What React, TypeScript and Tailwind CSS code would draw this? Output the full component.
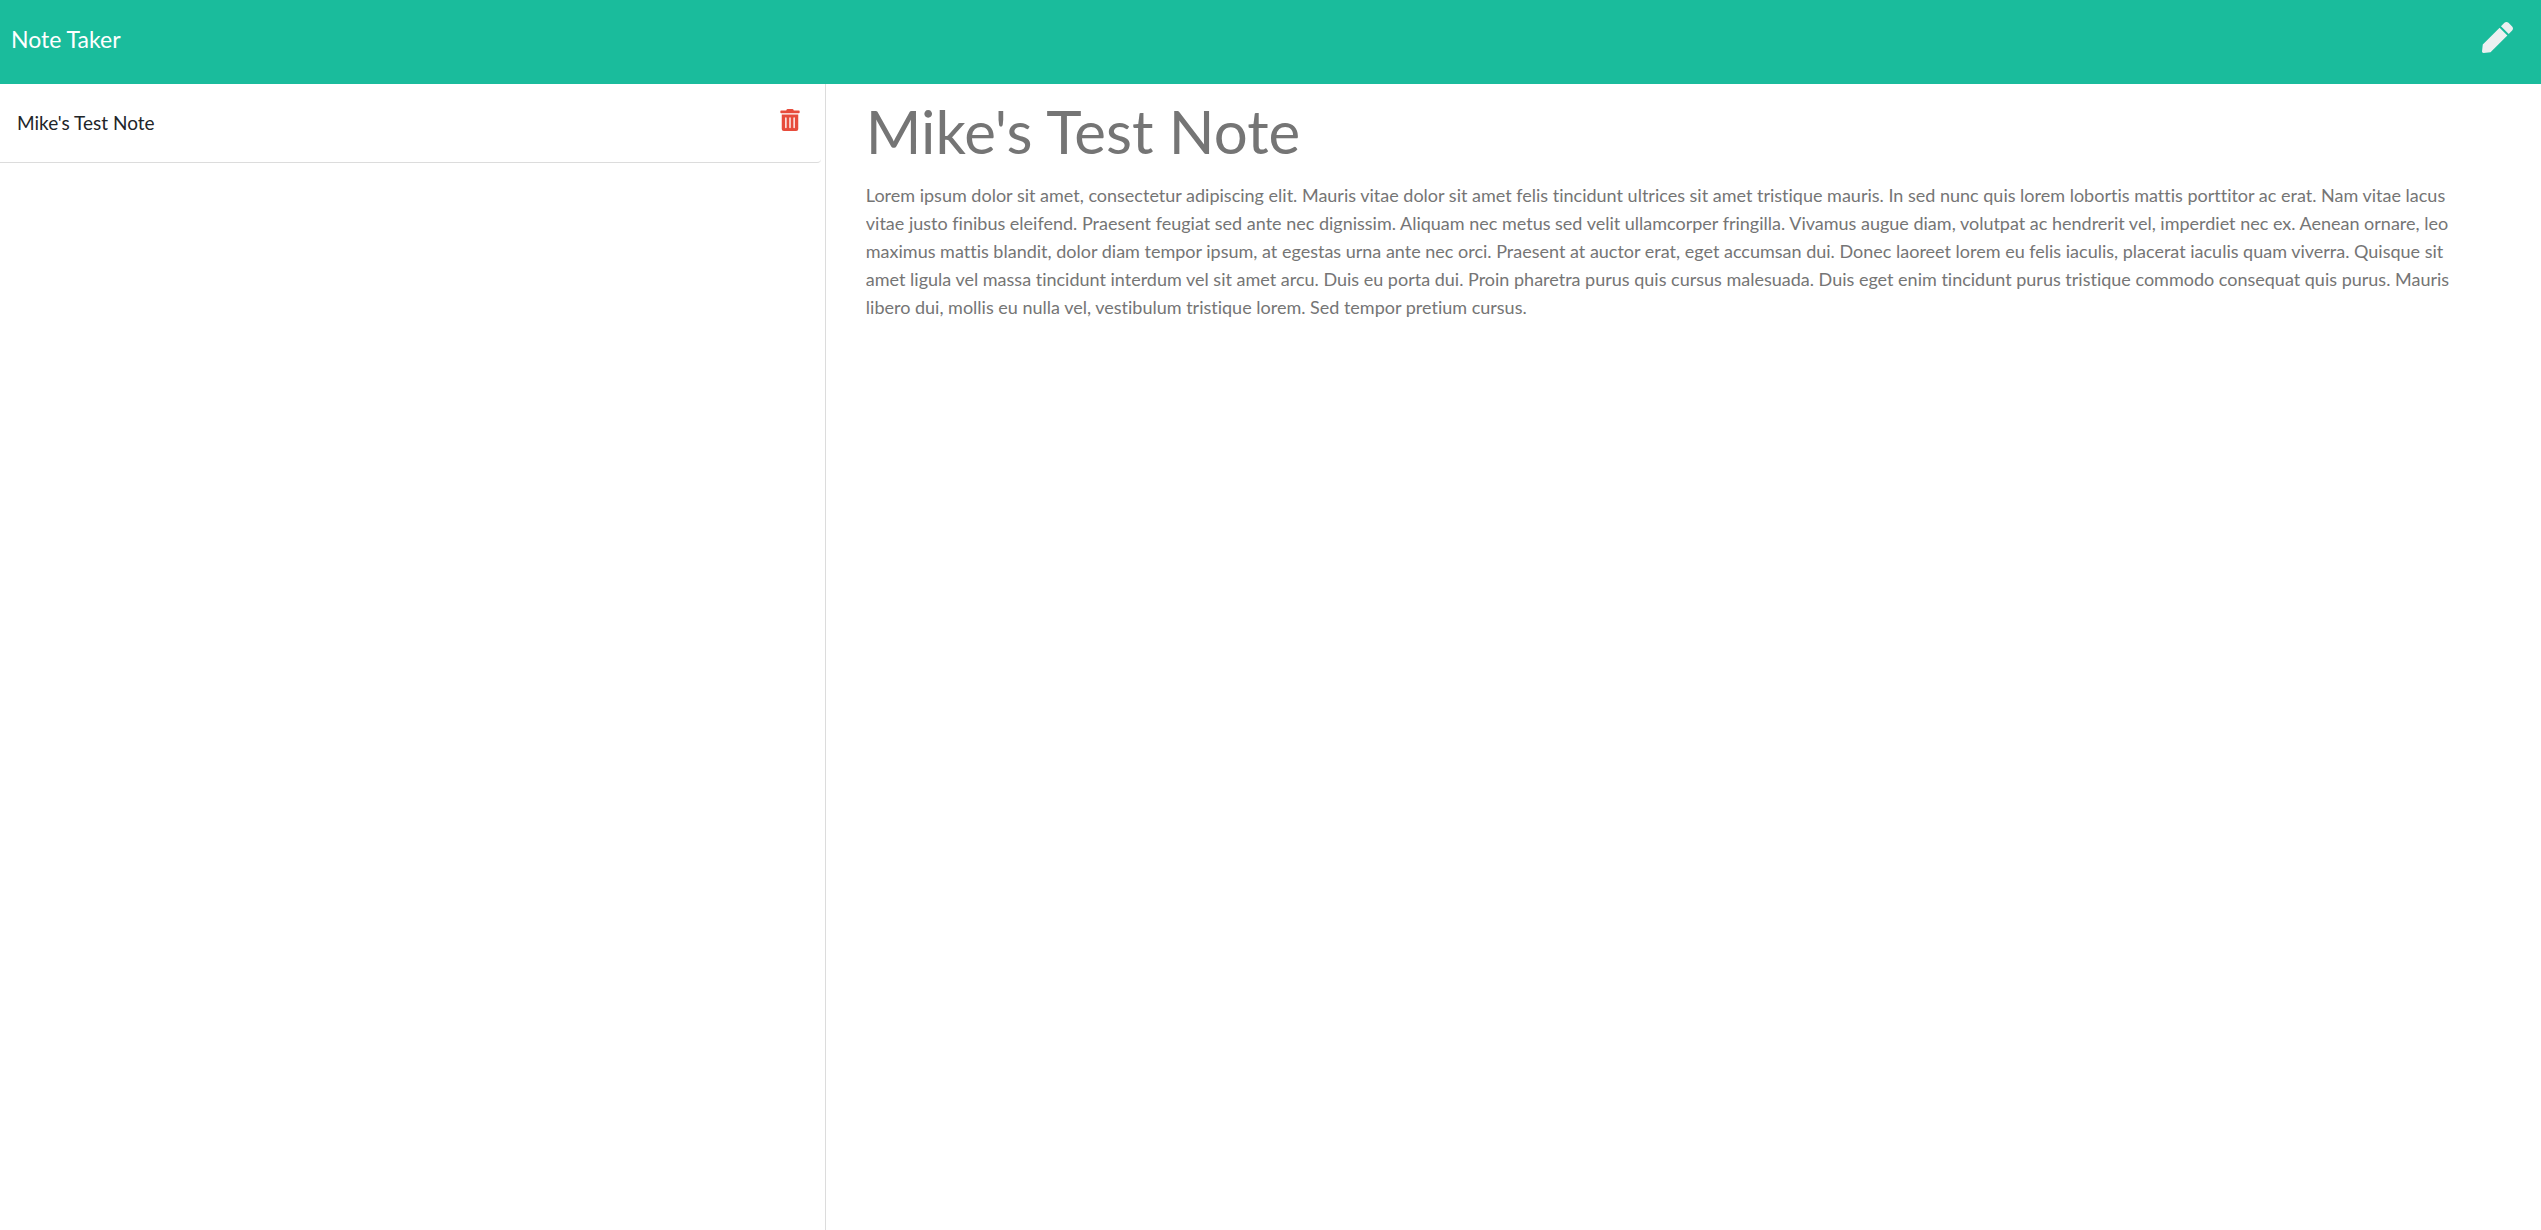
import { useState } from "react";
import { FaPen, FaTrashAlt } from "react-icons/fa";

const noteText =
  "Lorem ipsum dolor sit amet, consectetur adipiscing elit. Mauris vitae dolor sit amet felis tincidunt ultrices sit amet tristique mauris. In sed nunc quis lorem lobortis mattis porttitor ac erat. Nam vitae lacus vitae justo finibus eleifend. Praesent feugiat sed ante nec dignissim. Aliquam nec metus sed velit ullamcorper fringilla. Vivamus augue diam, volutpat ac hendrerit vel, imperdiet nec ex. Aenean ornare, leo maximus mattis blandit, dolor diam tempor ipsum, at egestas urna ante nec orci. Praesent at auctor erat, eget accumsan dui. Donec laoreet lorem eu felis iaculis, placerat iaculis quam viverra. Quisque sit amet ligula vel massa tincidunt interdum vel sit amet arcu. Duis eu porta dui. Proin pharetra purus quis cursus malesuada. Duis eget enim tincidunt purus tristique commodo consequat quis purus. Mauris libero dui, mollis eu nulla vel, vestibulum tristique lorem. Sed tempor pretium cursus.";

export default function App() {
  const [title, setTitle] = useState("Mike's Test Note");
  const [text, setText] = useState(noteText);

  return (
    <div className="flex min-h-screen flex-col bg-white font-['Lato',sans-serif] text-[19px] leading-7 text-[#212529]">
      <header className="flex h-[84px] items-start justify-between bg-[#1abc9c] pt-5 pr-7 pl-[11px]">
        <a href="#" className="text-[23px] leading-[38px] text-white">
          Note Taker
        </a>
        <button type="button" aria-label="New note" className="pt-0.5 text-[#ecf0f1]">
          <FaPen size={31} />
        </button>
      </header>
      <main className="flex grow">
        <nav aria-label="Notes" className="w-[32.5%] shrink-0 border-r border-[#dcdcdc]">
          <ul className="pr-1">
            <li className="flex h-[79px] items-start justify-between rounded-br border-b border-[#dcdcdc] pt-[25px] pr-5 pl-[17px]">
              <a href="#note">{title}</a>
              <button type="button" aria-label="Delete note" className="text-[#e74c3c]">
                <FaTrashAlt size={22} />
              </button>
            </li>
          </ul>
        </nav>
        <section id="note" className="flex grow flex-col pr-[70px] pl-10">
          <input
            aria-label="Note title"
            value={title}
            onChange={(e) => setTitle(e.target.value)}
            className="h-24 w-full pb-0.5 text-[60px] text-[#757575] outline-none"
          />
          <textarea
            aria-label="Note text"
            value={text}
            onChange={(e) => setText(e.target.value)}
            className="w-full grow resize-none pt-px text-lg leading-7 text-[#757575] outline-none [font-variant-ligatures:none]"
          />
        </section>
      </main>
    </div>
  );
}
